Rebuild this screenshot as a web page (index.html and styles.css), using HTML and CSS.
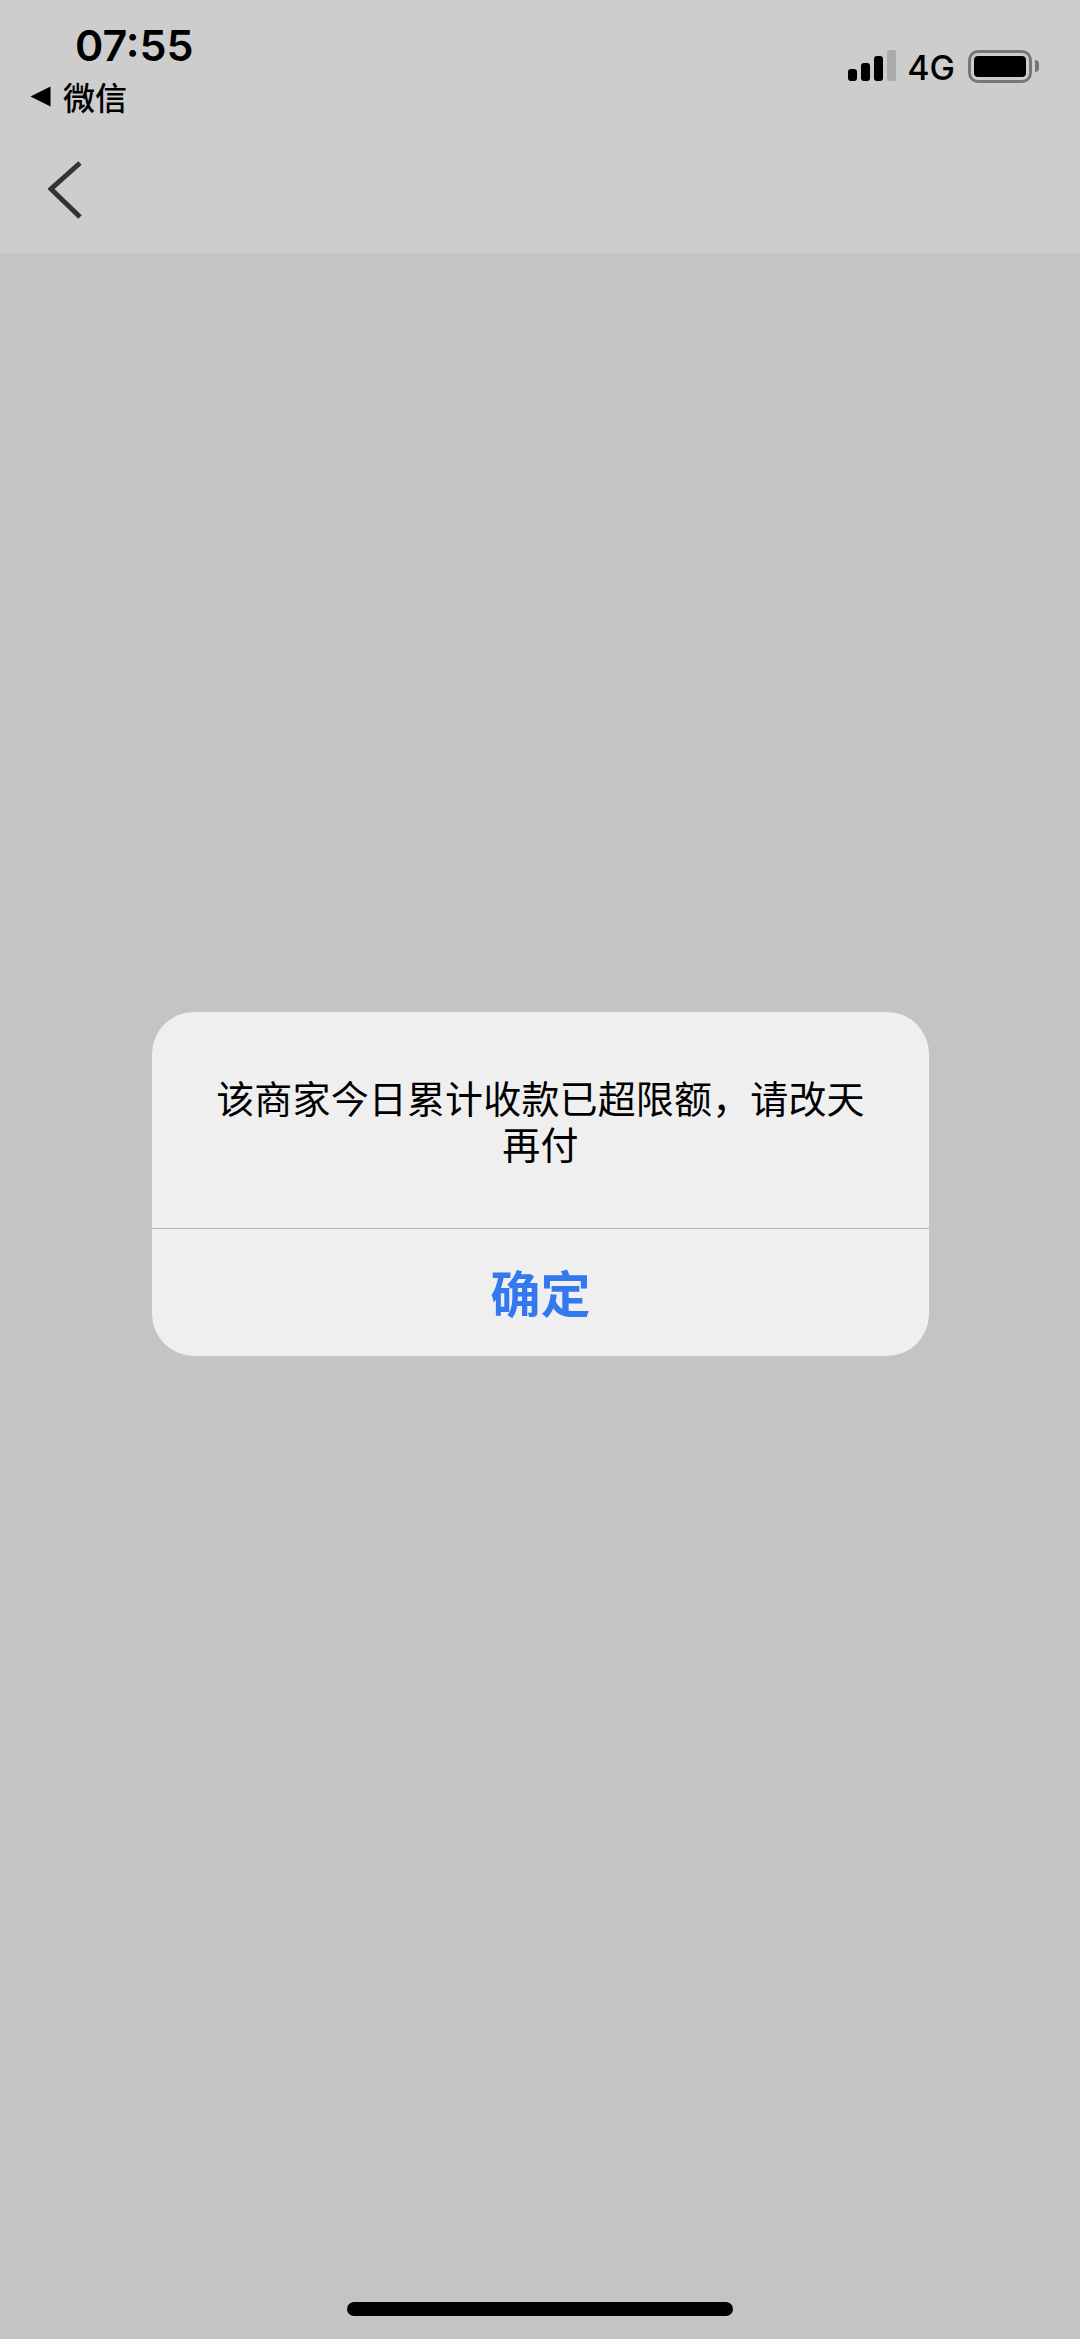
FILE: index.html
```html
<!DOCTYPE html>
<html lang="zh-CN">
<head>
    <meta charset="UTF-8">
    <meta name="viewport" content="width=device-width, initial-scale=1.0">
    <title>确定</title>
    <link rel="stylesheet" href="styles.css">
</head>
<body>
    <header class="top">
        <div class="status">
            <div class="status-left">
                <div class="time">07:55</div>
                <div class="carrier">
                    <svg class="carrier-arrow" width="21" height="21" viewBox="0 0 21 21"><path d="M0.5 10.5 L20.5 0.5 V20.5 Z" fill="#000"/></svg>
                    <span>微信</span>
                </div>
            </div>
            <div class="status-right">
                <div class="signal">
                    <span class="bar bar-1"></span>
                    <span class="bar bar-2"></span>
                    <span class="bar bar-3"></span>
                    <span class="bar bar-4"></span>
                </div>
                <span class="network">4G</span>
                <div class="battery"><div class="battery-level"></div></div>
                <div class="battery-cap"></div>
            </div>
        </div>
        <nav class="nav">
            <svg width="34" height="58" viewBox="0 0 34 58"><path d="M32 2 L3 28 L32 56" fill="none" stroke="#333" stroke-width="5"/></svg>
        </nav>
    </header>
    <main class="content">
        <div class="dialog">
            <p class="dialog-text">该商家今日累计收款已超限额，请改天再付</p>
            <button class="dialog-btn" type="button">确定</button>
        </div>
    </main>
    <footer class="home">
        <div class="home-bar"></div>
    </footer>
</body>
</html>
```

FILE: styles.css
```css
html, body {
    margin: 0;
    padding: 0;
}
body {
    width: 1080px;
    height: 2339px;
    display: flex;
    flex-direction: column;
    overflow: hidden;
    background: #c4c4c4;
    color: #000;
    font-family: "Noto Sans CJK SC", sans-serif;
}
.top {
    height: 253px;
    background: #cdcdcd;
}
.status {
    height: 126px;
    display: flex;
    justify-content: space-between;
}
.status-left {
    padding: 16px 0 0 30px;
}
.time {
    margin-left: 45px;
    font-family: Inter, sans-serif;
    font-size: 43px;
    font-weight: 600;
    line-height: 58px;
}
.carrier {
    display: flex;
    align-items: center;
    gap: 12px;
    height: 44px;
    font-size: 32px;
    font-weight: 500;
}
.status-right {
    display: flex;
    align-items: flex-start;
    padding: 50px 41px 0 0;
}
.signal {
    display: flex;
    align-items: flex-end;
    gap: 4px;
    height: 31px;
}
.bar {
    width: 9px;
    border-radius: 3px;
    background: #000;
}
.bar-1 { height: 12px; }
.bar-2 { height: 18px; }
.bar-3 { height: 25px; }
.bar-4 { height: 31px; background: #aaa; border-radius: 2px; }
.network {
    margin-left: 11px;
    font-family: Inter, sans-serif;
    font-size: 34px;
    font-weight: 500;
    line-height: 36px;
}
.battery {
    box-sizing: border-box;
    width: 64px;
    height: 33px;
    margin-left: 13px;
    padding: 3px;
    border: 3.5px solid #777;
    border-radius: 10px;
}
.battery-level {
    height: 100%;
    border-radius: 4px;
    background: #000;
}
.battery-cap {
    width: 4px;
    height: 12px;
    margin: 10px 0 0 3px;
    border-radius: 0 6px 6px 0;
    background: #777;
}
.nav {
    padding: 35px 0 0 48px;
}
.nav svg {
    display: block;
}
.content {
    flex: 1;
    padding: 759px 0 0 152px;
}
.dialog {
    width: 777px;
    border-radius: 42px;
    background: #efefef;
    overflow: hidden;
}
.dialog-text {
    margin: 0;
    height: 216px;
    box-sizing: border-box;
    padding: 62px 60px 0;
    font-size: 38px;
    letter-spacing: 0.15px;
    line-height: 46px;
    text-align: center;
}
.dialog-btn {
    display: block;
    width: 100%;
    height: 128px;
    padding: 0 0 4px;
    border: 0;
    border-top: 1px solid #b5b5b5;
    background: none;
    color: #3478f0;
    font-family: inherit;
    font-size: 50px;
    font-weight: 700;
}
.home {
    height: 37px;
    display: flex;
    justify-content: center;
}
.home-bar {
    width: 386px;
    height: 14px;
    border-radius: 7px;
    background: #000;
}
```
